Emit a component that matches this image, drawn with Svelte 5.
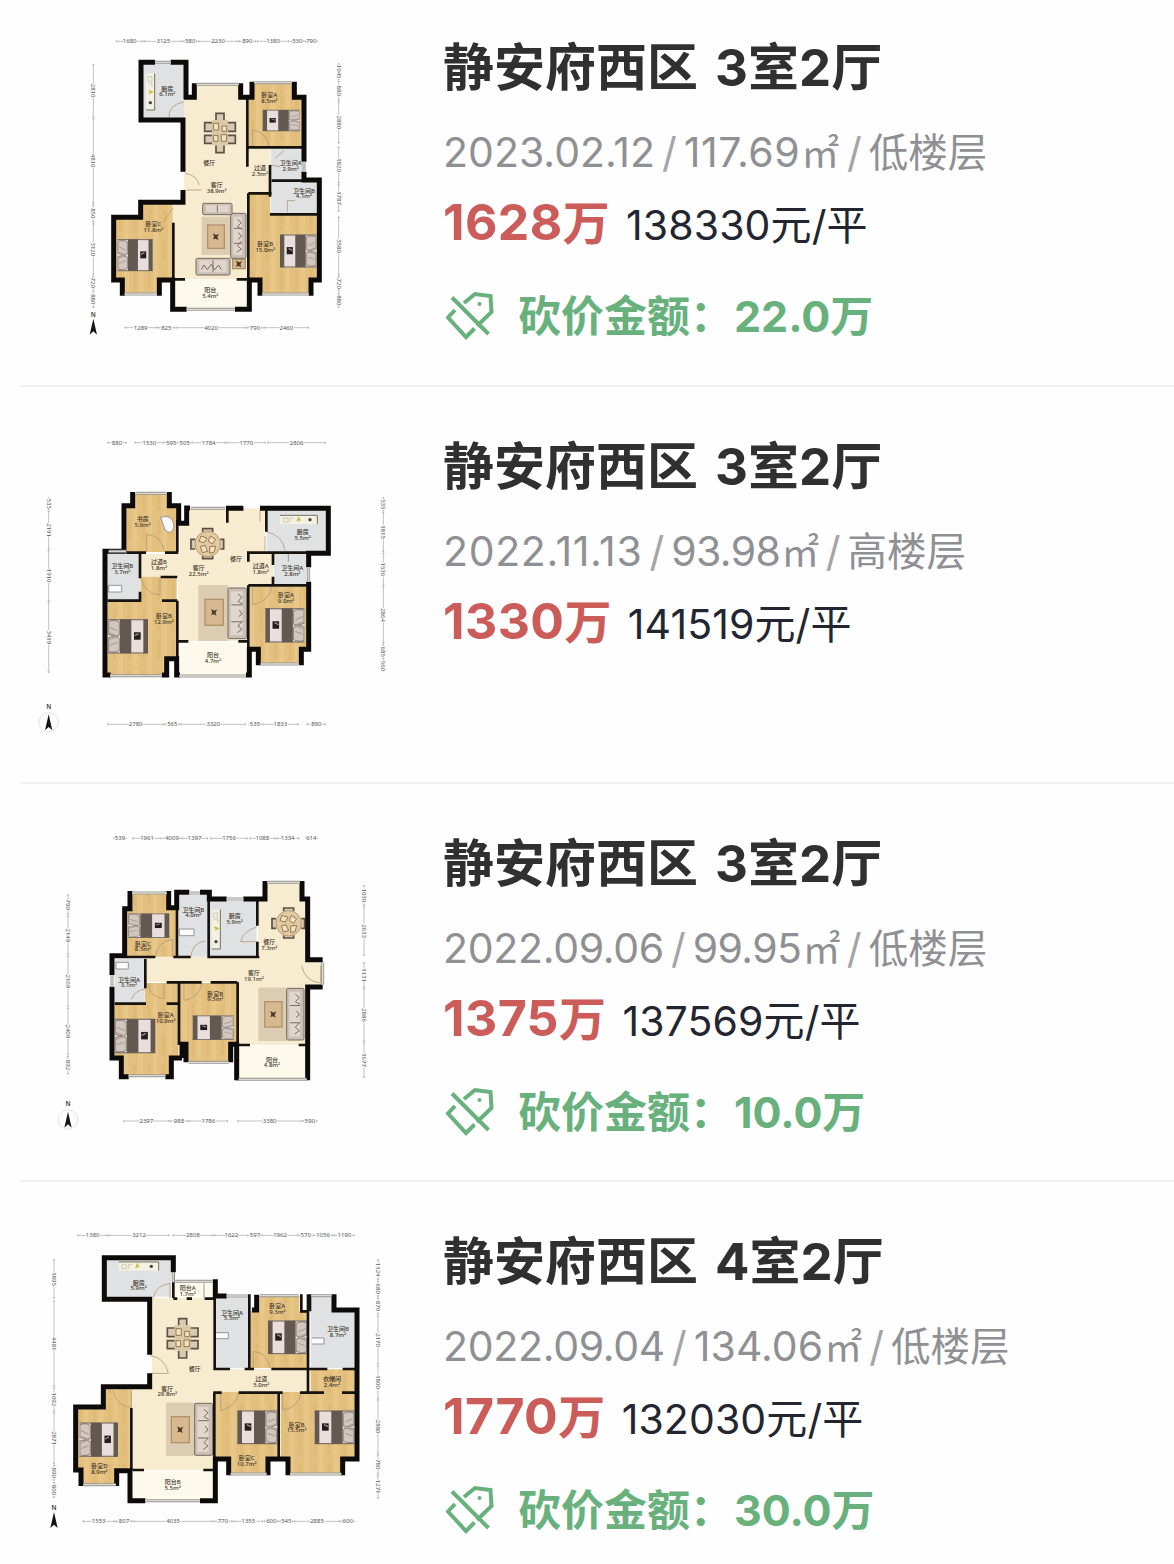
<script lang="ts">
	type Seg = [number, number, string];
	type Dim = { at: number; segs: Seg[] };
	type Plan = {
		x: number;
		y: number;
		floors: [string, string][];
		walls: string;
		inner: string;
		windows: string;
		doors: string;
		lines?: string;
		beds: [number, number, number, number, number][];
		tables: [number, number, string][];
		sofas: [number, number, number, number][];
		rugs: [number, number, number, number][];
		coffee: [number, number, number, number][];
		stoves: [number, number, number][];
		labels: [number, number, string, string][];
		top: Dim;
		bottom: Dim;
		left: Dim;
		right: Dim;
		north: [number, number, boolean];
	};

	const plans: Plan[] = [
		{
			x: 80,
			y: 30,
			floors: [
				['tile', '188,100 312,100 312,265 188,265'],
				['cream', '345,165 480,165 480,205 504,205 504,355 570,355 570,490 504,490 504,748 278,748 278,520 312,520 312,205 345,205'],
				['wood', '522,160 640,160 640,205 668,205 668,352 505,352 505,205 522,205'],
				['tile', '572,355 668,355 668,450 572,450'],
				['tile', '572,456 714,456 714,552 572,552'],
				['wood', '505,490 570,490 570,553 712,553 712,748 690,748 690,792 543,792 543,748 505,748'],
				['wood', '186,520 278,520 278,748 234,748 234,792 133,792 133,748 106,748 106,565 186,565'],
				['balcony', '283,750 504,750 504,836 283,836']
			],
			walls: 'M318 208V97H272M225 97H183V270H309V425M309 480V517H182V562H101V750H127V797M238 797V750H278V838H320M465 838H508V750H540V797M693 797V750H718V450H672V425M672 395V202H643V155M516 155V202H482V160M343 160V202H312',
			inner: 'M502 205V410M505 352H668M570 405V500M505 490H575M575 452H672M570 553H712M280 578V748M505 490V748M280 748H315M470 748H505',
			windows: 'M225 97H272M350 163H476M523 158H636M672 395V425M134 792H231M547 792H686M320 838H465',
			doors: 'M312 215Q265 225 267 262M316 430Q350 435 358 465M320 480H365M518 352V300Q560 305 568 352M278 535L250 575M622 545V512H645M572 405L600 410M585 385L612 362',
			beds: [[112, 628, 106, 95, 1], [710, 614, 110, 98, -1], [660, 240, 112, 63, -1]],
			tables: [[420, 308, 'long']],
			sofas: [[452, 550, 46, 135], [348, 685, 102, 50], [368, 520, 88, 34]],
			rugs: [[365, 560, 85, 115]],
			coffee: [[383, 585, 50, 70], [458, 688, 38, 28]],
			stoves: [[198, 130, 110]],
			labels: [[262, 182, '厨房', '6.1m²'], [568, 202, '卧室A', '8.5m²'], [388, 405, '餐厅', ''], [410, 472, '客厅', '38.9m²'], [540, 420, '过道', '2.5m²'], [632, 405, '卫生间A', '2.9m²'], [672, 488, '卫生间B', '4.1m²'], [220, 588, '卧室C', '11.8m²'], [556, 648, '卧室B', '15.0m²'], [391, 787, '阳台', '5.4m²']],
			top: { at: 34, segs: [[108, 190, '1680'], [192, 308, '3125'], [310, 352, '580'], [354, 474, '2230'], [476, 528, '890'], [530, 628, '1380'], [632, 672, '530'], [674, 714, '790']] },
			bottom: { at: 893, segs: [[134, 230, '1289'], [232, 286, '825'], [288, 498, '4020'], [500, 550, '790'], [552, 686, '2460']] },
			left: { at: 40, segs: [[102, 262, '2810'], [264, 520, '4810'], [522, 578, '850'], [580, 736, '3120'], [738, 778, '720'], [782, 834, '880']] },
			right: { at: 776, segs: [[100, 150, '1045'], [152, 212, '880'], [214, 340, '2880'], [350, 460, '1820'], [462, 546, '1787'], [560, 736, '3580'], [738, 784, '720'], [788, 834, '880']] },
			north: [40, 890, false]
		},
		{
			x: 30,
			y: 43,
			floors: [
				['wood', '314,190 412,190 412,228 440,228 440,366 290,366 290,228 314,228'],
				['cream', '450,275 480,275 480,235 704,235 704,366 655,366 655,634 445,634 445,440 332,440 332,372 450,372'],
				['tile', '710,238 890,238 890,366 710,366'],
				['tile', '232,370 330,370 330,510 232,510'],
				['cream', '655,368 730,368 730,466 655,466'],
				['tile', '732,370 832,370 832,466 732,466'],
				['wood', '332,440 440,440 440,690 404,690 404,738 232,738 232,514 332,514'],
				['wood', '660,470 830,470 830,655 808,655 808,702 690,702 690,655 660,655'],
				['balcony', '450,638 656,638 656,738 450,738']
			],
			walls: 'M308 186V227H282V364H225V735H242M396 735H410V686H440V735H450M418 186V227H446V280H470V234H480M588 235H640M690 235H895V370H836V412M836 455V658H814V706M685 706V658H658V735H648',
			inner: 'M592 235V278M709 238V305M442 270V366M290 368H348M405 368H445M655 395V368H895M729 372V405M729 440V466M655 466H836M330 370V445M330 485V512H232M396 512H442M392 441H442M442 512V740M655 466V738M445 634H475M625 634H655',
			windows: 'M318 190H408M482 235H586M236 364H288M836 412V455M240 737H396M448 738H648M692 702H806',
			doors: 'M350 365V312Q398 320 402 365M710 305Q760 318 765 362M668 475V524Q720 515 724 470M332 445Q345 490 390 495V445M640 235V240M690 240V275M705 318V362',
			beds: [[234, 568, 120, 102, 1], [824, 535, 118, 102, -1]],
			tables: [[533, 342, 'round']],
			sofas: [[594, 474, 56, 152]],
			rugs: [[505, 465, 90, 168]],
			coffee: [[525, 508, 55, 78]],
			stoves: [[750, 250, -112]],
			lines: 'M392 262Q430 250 432 290Q425 318 405 300ZM236 466H275V486H236ZM775 372V395M232 510V466',
			labels: [[338, 274, '书房', '5.9m²'], [277, 415, '卫生间B', '3.7m²'], [387, 402, '过道B', '1.8m²'], [506, 420, '客厅', '22.5m²'], [618, 392, '餐厅', ''], [818, 312, '厨房', '5.5m²'], [692, 415, '过道A', '1.8m²'], [787, 420, '卫生间A', '2.8m²'], [768, 502, '卧室A', '9.0m²'], [402, 564, '卧室B', '12.9m²'], [549, 682, '阳台', '4.7m²']],
			top: { at: 38, segs: [[232, 290, '880'], [314, 402, '1530'], [404, 444, '595'], [446, 482, '505'], [484, 588, '1784'], [590, 708, '1770'], [712, 888, '2806']] },
			bottom: { at: 883, segs: [[232, 402, '2780'], [404, 450, '565'], [452, 648, '3320'], [656, 694, '535'], [696, 806, '1833'], [830, 888, '890']] },
			left: { at: 56, segs: [[202, 240, '535'], [242, 358, '2191'], [360, 514, '1910'], [516, 728, '3419']] },
			right: { at: 1060, segs: [[202, 244, '535'], [246, 366, '1815'], [368, 468, '1536'], [470, 640, '2864'], [642, 688, '685'], [690, 726, '560']] },
			north: [56, 877, true]
		},
		{
			x: 50,
			y: 41,
			floors: [
				['wood', '248,204 350,204 350,246 378,246 378,395 230,395 230,255 248,255'],
				['tile', '386,210 476,210 476,395 386,395'],
				['tile', '480,228 620,228 620,395 480,395'],
				['cream', '650,174 750,174 750,218 768,218 768,410 815,410 815,480 768,480 768,660 566,660 566,470 285,470 285,396 624,396 624,218 650,218'],
				['tile', '194,402 284,402 284,536 194,536'],
				['wood', '285,474 385,474 385,695 358,695 358,750 222,750 222,695 194,695 194,540 285,540'],
				['wood', '390,474 562,474 562,658 538,658 538,710 414,710 414,658 390,658'],
				['balcony', '568,662 770,662 770,765 568,765']
			],
			walls: 'M240 198V251H224V392H186V450M186 485V699H214V755H236M346 755H364V699H396M356 198V248H380V202H418M450 202H478V222H530M580 222H645V168M756 168V222H773V404H818M818 486H773V766M560 766V658H542V712M408 712V658H396V699',
			inner: 'M381 250V396M230 396H316M370 396H422M472 396H628M476 225V396M622 222V302M622 350V396M286 402V490M350 472H385M385 472H455M482 472H562M387 472V660M194 536H288M350 536H384M563 472V766M566 660H600M746 660H770',
			windows: 'M246 204H350M418 204H450M530 222H580M652 172H750M186 450V485M818 412V480M236 752H346M416 712H536M566 763H770',
			doors: 'M316 396Q320 350 368 343V396M422 396Q428 352 466 348M620 306Q578 320 572 350H620M755 422Q765 470 812 474V422M244 524Q255 495 286 492M295 478Q300 515 342 522V478M455 475Q448 520 402 526M402 478V526',
			beds: [[234, 266, 124, 72, 1], [194, 582, 122, 102, 1], [552, 572, 124, 72, -1]],
			tables: [[716, 295, 'round']],
			sofas: [[710, 490, 52, 155]],
			rugs: [[625, 488, 84, 160]],
			coffee: [[644, 530, 52, 76]],
			stoves: [[485, 254, 118]],
			lines: 'M388 312H432V332H388ZM198 412H235V432H198Z',
			labels: [[279, 362, '卧室C', '8.5m²'], [430, 260, '卫生间B', '4.0m²'], [554, 280, '厨房', '5.9m²'], [658, 358, '餐厅', '7.3m²'], [612, 450, '客厅', '19.1m²'], [237, 470, '卫生间A', '3.1m²'], [347, 576, '卧室A', '10.9m²'], [496, 512, '卧室B', '9.5m²'], [666, 710, '阳台', '4.8m²']],
			top: { at: 40, segs: [[190, 230, '539'], [246, 336, '1961'], [340, 392, '4009'], [394, 474, '1397'], [480, 594, '1756'], [598, 676, '1088'], [678, 748, '1334'], [766, 802, '614']] },
			bottom: { at: 888, segs: [[220, 358, '2397'], [360, 414, '988'], [416, 534, '1786'], [562, 756, '3380'], [758, 802, '590']] },
			left: { at: 54, segs: [[208, 270, '790'], [272, 390, '2149'], [392, 546, '2169'], [548, 690, '2409'], [692, 748, '892']] },
			right: { at: 942, segs: [[180, 242, '1030'], [244, 392, '2633'], [412, 488, '1131'], [490, 650, '2886'], [652, 758, '1677']] },
			north: [54, 884, true]
		},
		{
			x: 40,
			y: 42,
			floors: [
				['tile', '200,108 394,108 394,218 200,218'],
				['cream', '336,222 520,222 520,436 806,436 806,504 520,504 520,738 276,738 276,494 336,494'],
				['balcony', '402,176 520,176 520,222 402,222'],
				['tile', '526,220 624,220 624,432 526,432'],
				['wood', '658,216 778,216 778,262 802,262 802,432 632,432 632,262 658,262'],
				['tile', '812,216 876,216 876,262 944,262 944,432 812,432'],
				['wood', '812,436 944,436 944,700 908,700 908,748 750,748 750,700 722,700 722,504 812,504'],
				['wood', '526,504 712,504 712,700 682,700 682,748 570,748 570,700 526,700'],
				['wood', '194,496 276,496 276,738 232,738 232,780 128,780 128,738 114,738 114,556 194,556'],
				['balcony', '278,740 520,740 520,828 278,828']
			],
			walls: 'M400 145V101H193V226H329V392M329 448V488H190V549H107V738H123V786M230 786V740H270V830H316M480 830H526V705H566V754M684 754V705H744V754M908 754V705H951V258H882V211M526 166V216H560M650 212V258H636',
			inner: 'M400 145V222M400 224H412M440 224H456M494 224H522M524 220V436M520 435H570M614 435H642M694 435H862M908 435H945M628 211V434M804 211V504M784 211V262H804M810 211V262M520 506H545M596 506H728M780 506H852M906 506H945M523 506V740M716 506V700M274 552V738M278 738H312M490 738H522',
			windows: 'M406 172H518M400 145V175M560 216H624M660 215H776M814 215H874M130 782H228M572 750H680M750 750H904M316 830H480',
			doors: 'M340 222Q345 185 390 178V222M330 395Q375 400 385 448H330M220 500Q230 548 274 550V500M542 508V560Q590 545 596 508M640 432V382Q682 385 690 432M728 508V558Q778 550 782 508',
			lines: 'M492 178V222M528 326H565V344H528M816 342H852V360H816',
			beds: [[118, 596, 116, 102, 1], [802, 290, 118, 100, -1], [712, 560, 120, 100, -1], [944, 560, 120, 100, -1]],
			tables: [[428, 342, 'long']],
			sofas: [[464, 538, 54, 156]],
			rugs: [[378, 536, 86, 160]],
			coffee: [[394, 578, 54, 78]],
			stoves: [[236, 108, -120]],
			labels: [[296, 182, '厨房', '5.9m²'], [443, 198, '阳台A', '1.7m²'], [576, 272, '卫生间A', '5.5m²'], [712, 252, '卧室A', '9.3m²'], [894, 322, '卫生间B', '8.7m²'], [464, 442, '餐厅', ''], [382, 500, '客厅', '29.8m²'], [664, 472, '过道', '5.0m²'], [876, 472, '衣帽间', '2.4m²'], [178, 732, '卧室D', '8.9m²'], [620, 708, '卧室C', '10.7m²'], [770, 608, '卧室B', '15.5m²'], [398, 780, '阳台B', '5.5m²']],
			top: { at: 34, segs: [[112, 204, '1380'], [206, 388, '3212'], [398, 520, '2808'], [522, 626, '1622'], [628, 662, '597'], [664, 776, '1962'], [778, 816, '570'], [818, 880, '1056'], [882, 944, '1190']] },
			bottom: { at: 892, segs: [[128, 224, '1553'], [226, 278, '807'], [280, 518, '4035'], [520, 578, '770'], [580, 670, '1355'], [672, 716, '600'], [718, 760, '545'], [762, 900, '2885'], [902, 944, '600']] },
			left: { at: 42, segs: [[106, 224, '1895'], [230, 488, '4481'], [490, 562, '1092'], [564, 720, '2871'], [722, 770, '890'], [774, 822, '800']] },
			right: { at: 1014, segs: [[106, 168, '1124'], [170, 218, '680'], [220, 272, '870'], [274, 422, '2170'], [424, 524, '1800'], [526, 690, '2880'], [692, 750, '780'], [752, 824, '1271']] },
			north: [42, 888, false]
		}
	];

	const listings = [
		{ rooms: '3室2厅', date: '2023.02.12', area: '117.69', floor: '低', total: '1628', unit: '138330', cut: '22.0' },
		{ rooms: '3室2厅', date: '2022.11.13', area: '93.98', floor: '高', total: '1330', unit: '141519', cut: '' },
		{ rooms: '3室2厅', date: '2022.09.06', area: '99.95', floor: '低', total: '1375', unit: '137569', cut: '10.0' },
		{ rooms: '4室2厅', date: '2022.09.04', area: '134.06', floor: '低', total: '1770', unit: '132030', cut: '30.0' }
	];

	// the figure one is narrow, so numbers with many of them get looser tracking
	function tracking(text: string) {
		const ones = text.split('1').length - 1;
		return `${(ones * 3.2 - 3) / text.length}px`;
	}
</script>

{#snippet segments(dim: Dim)}
	{#each dim.segs as [a, b, text]}
		<path class="dim" d="M{a} 0H{b}M{a + 4} -3L{a} 0L{a + 4} 3M{b - 4} -3L{b} 0L{b - 4} 3" />
		<text class="size" x={(a + b) / 2} y="6">{text}</text>
	{/each}
{/snippet}

{#snippet floorPlan(p: Plan)}
	<svg class="plan" viewBox="{-p.x * 3} {-p.y * 3} 1260 1080">
		<defs>
			<pattern id="planks" width="44" height="90" patternUnits="userSpaceOnUse">
				<rect width="44" height="90" fill="#e3c07e" />
				<rect width="15" height="90" fill="#e7c688" />
				<rect x="29" width="8" height="60" fill="#dfba75" />
			</pattern>
		</defs>
		{#each p.floors as [kind, points]}
			<polygon class={kind} {points} />
		{/each}
		{#each p.rugs as [x, y, w, h]}
			<rect {x} {y} width={w} height={h} fill="#dccdb2" />
		{/each}
		{#each p.coffee as [x, y, w, h]}
			<rect {x} {y} width={w} height={h} fill="#d6b98f" stroke="#b0926d" stroke-width="4" />
			<path d="M{x + w / 2 - 9} {y + h / 2 - 10}l9 5l9 -4l-5 10l3 9l-8 -4l-8 2l3 -8z" fill="#4a3a27" />
		{/each}
		{#each p.sofas as [x, y, w, h]}
			<rect {x} {y} width={w} height={h} rx="4" fill="#c9bfb3" stroke="#746a62" stroke-width="3" />
			{#if h > w}
				<rect x={x + 8} y={y + 10} width={w - 20} height={h - 20} fill="#e0d6cc" />
				<path d="M{x + 10} {y + h / 3}h{w - 22}M{x + 10} {y + (h * 2) / 3}h{w - 22}M{x + w - 26} {y + 18}l12 10l-12 12l14 8M{x + w - 28} {y + h - 18}l14 -10l-12 -10l12 -14M{x + w - 22} {y + h / 2 - 10}l8 12l-10 8" class="fold" />
			{:else}
				<rect x={x + 10} y={y + 6} width={w - 20} height={h - 14} fill="#e0d6cc" />
				<path d="M{x + w / 2} {y + 6}v{h - 14}" class="fold" />
				{#if h > 40}
					<path d="M{x + 16} {y + 34}l8 -14l10 14l12 -16l10 16l12 -14l8 14" class="fold" />
				{/if}
			{/if}
		{/each}
		{#each p.tables as [x, y, kind]}
			<g transform="translate({x} {y})">
				{#if kind === 'long'}
					<path class="chair" d="M-12 -38V-58H12V-38M-12 38V60H12V38M-22 -30H-46V-4H-22M22 -30H46V-4H22M-22 8H-46V32H-22M22 8H46V32H22" />
					<rect x="-24" y="-38" width="48" height="76" fill="#dac8a8" />
					<path d="M-20 -28h16v20h-16zM6 -20h14v16h-14zM-20 8h14v18h-14zM4 6h16v20h-16z" class="dish" />
				{:else}
					<path class="chair" d="M-15 -36V-46H15V-36M-15 36V44H15V36M-38 -14H-50V15H-38M38 -14H48V15H38" />
					<circle r="38" fill="#e2cba0" stroke="#b59a72" stroke-width="3" />
					<path d="M-20 -24l18 6l-8 14l-16 -4zM8 -24l16 10l-10 14l-12 -8zM-22 8l14 -4l8 18l-16 4zM6 8l18 -2l-4 18l-14 4z" class="dish" />
				{/if}
			</g>
		{/each}
		{#each p.beds as [x, y, w, h, dir]}
			<g transform="translate({x} {y}) scale({(w / 120) * dir} {h / 100})">
				<rect width="120" height="100" fill="#e9dedb" />
				<path d="M2 6Q20 0 34 8V46Q18 52 2 44ZM2 54Q20 48 34 56V92Q18 100 2 94Z" fill="#d2c7bf" stroke="#91857d" stroke-width="3" />
				<path d="M4 40L30 50L4 60M6 24L28 34M6 76L28 68" fill="none" stroke="#a69b94" stroke-width="3" />
				<path d="M36 0H70V100H36ZM106 0H120V100H106Z" fill="#635951" />
				<path d="M78 38H98V60H78Z" fill="#211e1d" />
				<path d="M80 48L92 42" stroke="#a68f84" stroke-width="4" />
				<path d="M0 1H120M0 99H120" stroke="#675d55" stroke-width="3" />
			</g>
		{/each}
		{#each p.stoves as [x, y, len]}
			<g transform="translate({x} {y}){len < 0 ? ` translate(0 32) rotate(-90)` : ''}">
				<rect width="26" height={Math.abs(len)} fill="#f4f1e2" />
				<path d="M26 0V{Math.abs(len)}H0" fill="none" stroke="#77725f" stroke-width="3" />
				<path d="M6 10h12v14h-12zM6 30h12v10" fill="none" stroke="#bcb8aa" stroke-width="2" />
				<path d="M8 52l10 4l-8 5" fill="none" stroke="#cdbb4c" stroke-width="5" />
				<circle cx="13" cy={Math.abs(len) - 22} r="5" fill="#47433c" />
			</g>
		{/each}
		<path class="door" d={p.doors} />
		<path class="fixture" d={p.lines ?? ''} />
		<path class="inner" d={p.inner} />
		<path class="wall" d={p.walls} />
		<path class="window" d={p.windows} />
		<path class="pane" d={p.windows} />
		{#each p.labels as [x, y, name, size]}
			<text class="room" {x} {y}>{name}</text>
			<text class="room" {x} y={y + 17}>{size}</text>
		{/each}
		<g transform="translate(0 {p.top.at})">{@render segments(p.top)}</g>
		<g transform="translate(0 {p.bottom.at})">{@render segments(p.bottom)}</g>
		<g transform="translate({p.left.at} 0) rotate(90)">{@render segments(p.left)}</g>
		<g transform="translate({p.right.at} 0) rotate(90)">{@render segments(p.right)}</g>
		<g transform="translate({p.north[0]} {p.north[1]})">
			{#if p.north[2]}
				<circle r="29" fill="none" stroke="#d5d5d5" stroke-width="2" />
			{/if}
			<path d="M0 -24L11 24L0 14L-11 24Z" fill="#151515" />
			<text class="compass" y={p.north[2] ? -40 : -30}>N</text>
		</g>
	</svg>
{/snippet}

<main>
	{#each listings as item, i}
		<article>
			{@render floorPlan(plans[i])}
			<div class="info">
				<h2>静安府西区 <span>{item.rooms}</span></h2>
				<p class="meta">
					<span style:letter-spacing={tracking(item.date)}>{item.date}</span><i>/</i><span style:letter-spacing={tracking(item.area)}>{item.area}<small>㎡</small></span><i>/</i><span class="floor">{item.floor}楼层</span>
				</p>
				<p class="price">
					<strong>{item.total}<small>万</small></strong>
					<span>{item.unit}元/平</span>
				</p>
				{#if item.cut}
					<p class="cut">
						<svg viewBox="0 0 48 50">
							<path d="M18 12L29 3L44.500 5L45.500 21L31 35M9 19L2 26.500L20 46L28.500 37.500M6 6.500L42.500 43" />
							<circle cx="33.500" cy="13" r="2" />
						</svg>
						<span class="label">砍价金额：</span>
						<span>{item.cut}万</span>
					</p>
				{/if}
			</div>
		</article>
	{/each}
</main>

<style>
	:global(body) {
		margin: 0;
		background: #fefefe;
	}

	main {
		height: 1564px;
		overflow: hidden;
		font-family: Inter, 'Noto Sans CJK SC', sans-serif;
	}

	article {
		display: flex;
		box-sizing: border-box;
		height: 398px;
		margin-left: 20px;
		border-bottom: 2px solid #f1f1f1;
	}

	article:first-child {
		height: 387px;
	}

	article:nth-child(2) {
		height: 397px;
	}

	article:last-child {
		border-bottom: 0;
	}

	.plan {
		flex: none;
		width: 420px;
		height: 360px;
		margin-left: -20px;
	}

	.info {
		padding: 52px 0 0 23px;
	}

	article:first-child .info {
		padding-top: 40px;
	}

	h2,
	p {
		margin: 0;
		white-space: nowrap;
	}

	h2 {
		font-size: 51px;
		line-height: 56px;
		font-weight: 700;
		word-spacing: 5px;
		color: #303031;
	}

	.meta {
		display: flex;
		align-items: baseline;
		margin-top: 34px;
		font-size: 41px;
		line-height: 44px;
		color: #8e9093;
	}

	.meta i {
		margin: 0 7px;
		font-style: normal;
		color: #a3a5a8;
	}

	.meta small {
		margin-left: 1px;
		font-size: 38px;
	}

	.meta .floor {
		font-size: 39.5px;
	}

	.price {
		display: flex;
		align-items: baseline;
		gap: 16px;
		margin-top: 21px;
		line-height: 52px;
	}

	.price strong {
		font-size: 50px;
		font-weight: 700;
		letter-spacing: 0.4px;
		color: #cb5c59;
	}

	.price small {
		font-size: 47px;
	}

	.price span {
		font-size: 41px;
		letter-spacing: 0.1px;
		color: #232630;
	}

	.cut {
		display: flex;
		align-items: center;
		margin-top: 40px;
		font-size: 43px;
		line-height: 48px;
		font-weight: 700;
		color: #68b17d;
	}

	.cut svg {
		width: 48px;
		height: 50px;
		margin: 0 24px 0 3px;
		fill: none;
		stroke: #68b17d;
		stroke-width: 4;
	}

	.cut circle {
		fill: #68b17d;
		stroke: none;
	}

	.cut .label {
		margin-right: 1px;
	}

	.tile {
		fill: #e0e1e3;
	}

	.cream {
		fill: #f7ebd0;
	}

	.wood {
		fill: url(#planks);
	}

	.balcony {
		fill: #fdfaec;
	}

	.wall,
	.inner,
	.window,
	.pane,
	.door,
	.dim,
	.fold {
		fill: none;
	}

	.wall {
		stroke: #0c0b0a;
		stroke-width: 15;
	}

	.inner {
		stroke: #16130f;
		stroke-width: 8;
	}

	.window {
		stroke: #99968f;
		stroke-width: 9;
	}

	.pane {
		stroke: #d9d7d2;
		stroke-width: 4;
	}

	.door {
		stroke: #b29b78;
		stroke-width: 2.5;
	}

	.fixture {
		fill: #fbfbfb;
		stroke: #85858a;
		stroke-width: 2.5;
	}

	.chair {
		fill: #d9c9b4;
		stroke: #5e5144;
		stroke-width: 5;
	}

	.dish {
		fill: #f1e1bf;
		stroke: #96784f;
		stroke-width: 3;
	}

	.fold {
		stroke: #776d68;
		stroke-width: 3;
	}

	.dim {
		stroke: #a3a3a3;
		stroke-width: 2;
	}

	.plan text {
		text-anchor: middle;
		font-family: 'Noto Sans', 'Noto Sans CJK SC', sans-serif;
		fill: #3c352c;
	}

	.plan .room {
		font-size: 18px;
		font-weight: 500;
	}

	.plan .size {
		font-size: 18px;
		fill: #555;
		stroke: #fefefe;
		stroke-width: 5;
		paint-order: stroke;
	}

	.plan .compass {
		font-size: 19px;
		font-weight: 600;
	}
</style>
